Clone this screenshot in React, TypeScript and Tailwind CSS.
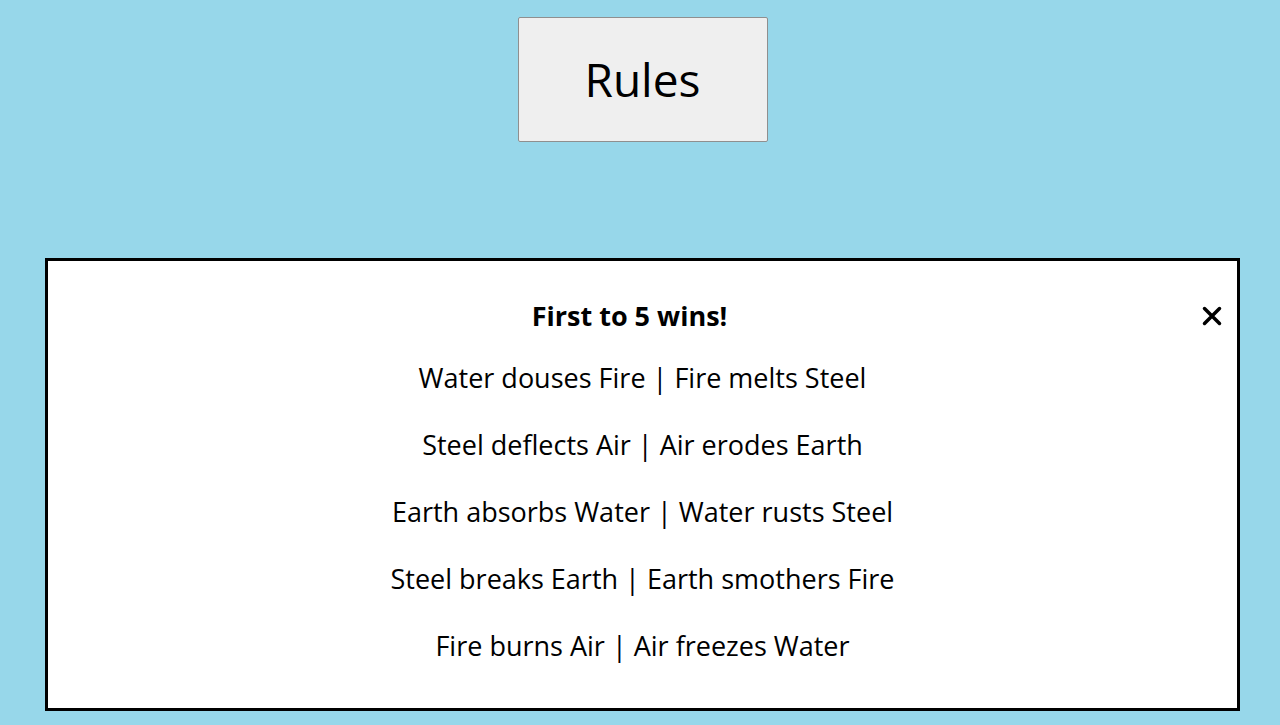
import React from "react";

const rules = [
  "Water douses Fire | Fire melts Steel",
  "Steel deflects Air | Air erodes Earth",
  "Earth absorbs Water | Water rusts Steel",
  "Steel breaks Earth | Earth smothers Fire",
  "Fire burns Air | Air freezes Water",
];

export default function App() {
  return (
    <div
      className="min-h-screen w-full bg-[#97d7ea] text-black"
      style={{ fontFamily: '"Open Sans", "Noto Sans", sans-serif' }}
    >
      {/* Rules button */}
      <div className="flex justify-center pt-[17px]">
        <button className="ml-[5px] flex h-[125px] w-[250px] items-center justify-center rounded-[2px] border border-[#8f8f8f] bg-[#efefef] text-[46px]">
          Rules
        </button>
      </div>

      {/* Rules modal */}
      <div className="ml-[45px] mt-[116px] h-[453px] w-[1195px] border-[3px] border-black bg-white pt-[26px] pb-[28px]">
        <div className="relative flex h-[57px] items-center">
          <h2 className="flex-1 pt-[2px] pr-[26px] text-center text-[27px] font-bold">
            First to 5 wins!
          </h2>
          <button className="absolute right-[13px] top-[17px] flex h-[24px] w-[24px] items-center justify-center">
            <svg width="20" height="20" viewBox="0 0 20 20">
              <path d="M2.5 2.5 L17.5 17.5 M17.5 2.5 L2.5 17.5" stroke="black" strokeWidth="3.5" strokeLinecap="round" />
            </svg>
          </button>
        </div>
        {rules.map((r) => (
          <p key={r} className="h-[67px] text-center text-[27px] leading-[67px]">
            {r}
          </p>
        ))}
      </div>
    </div>
  );
}
